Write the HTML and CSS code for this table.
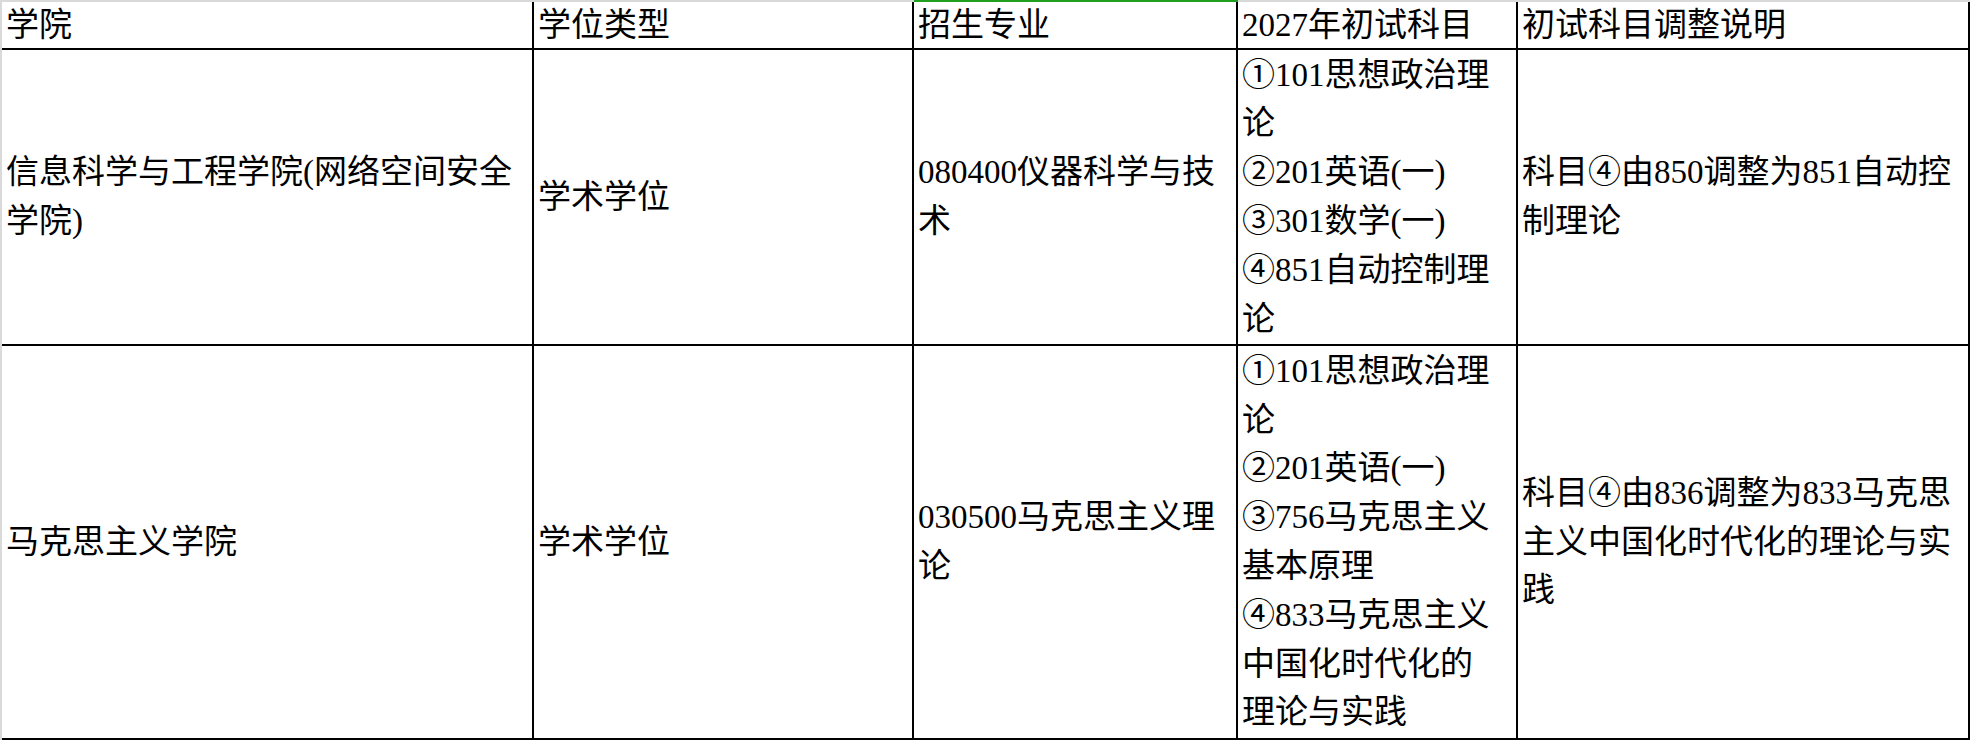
FILE: index.html
```html
<!DOCTYPE html>
<html lang="zh-CN">
<head>
<meta charset="utf-8">
<title>2027年初试科目调整</title>
<link rel="stylesheet" href="styles.css">
</head>
<body>
<div class="sheet">
  <div class="cell head">学院</div>
  <div class="cell head">学位类型</div>
  <div class="cell head selected">招生专业</div>
  <div class="cell head">2027年初试科目</div>
  <div class="cell head">初试科目调整说明</div>

  <div class="cell">信息科学与工程学院(网络空间安全学院)</div>
  <div class="cell">学术学位</div>
  <div class="cell">080400仪器科学与技术</div>
  <div class="cell">①101思想政治理论<br>②201英语(一)<br>③301数学(一)<br>④851自动控制理论</div>
  <div class="cell">科目④由850调整为851自动控制理论</div>

  <div class="cell">马克思主义学院</div>
  <div class="cell">学术学位</div>
  <div class="cell">030500马克思主义理论</div>
  <div class="cell">①101思想政治理论<br>②201英语(一)<br>③756马克思主义基本原理<br>④833马克思主义中国化时代化的理论与实践</div>
  <div class="cell">科目④由836调整为833马克思主义中国化时代化的理论与实践</div>
</div>
</body>
</html>
```

FILE: styles.css
```css
html, body {
  margin: 0;
  padding: 0;
  background: #d9d9d9;
}

body {
  width: 1970px;
  height: 740px;
  overflow: hidden;
  padding: 2px 0 0 2px;
  box-sizing: border-box;
  font-family: "Liberation Serif", "Noto Sans CJK SC", serif;
  font-size: 33px;
  color: #000;
}

.sheet {
  display: grid;
  grid-template-columns: 532px 380px 324px 280px 452px;
  grid-template-rows: 48px 296px 394px;
  background: #fff;
}

.cell {
  box-sizing: border-box;
  border-right: 2px solid #000;
  border-bottom: 2px solid #000;
  padding: 0 14px 0 4px;
  display: flex;
  align-items: center;
  line-height: 48.8px;
  overflow: hidden;
  word-break: normal;
}

.cell.head {
  white-space: nowrap;
}

.selected {
  box-shadow: 0 -2px 0 #1f9e1f;
}
```
